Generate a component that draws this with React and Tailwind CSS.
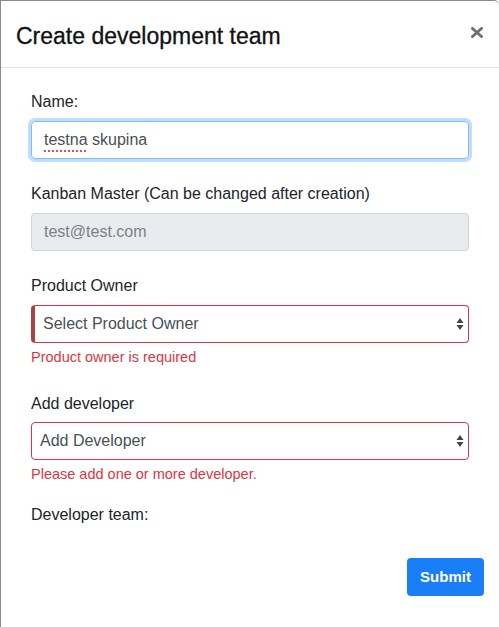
import React from 'react';

const Arrows = () => (
  <svg width="8" height="14" viewBox="0 0 8 14" className="absolute right-[4px] top-1/2 -translate-y-1/2">
    <path d="M4 1 L7.5 6 L0.5 6 Z" fill="#444" />
    <path d="M4 13 L7.5 8 L0.5 8 Z" fill="#444" />
  </svg>
);

const Label = ({ children, className = '' }) => (
  <div className={`text-[16px] leading-[24px] text-[#212529] ${className}`}>{children}</div>
);

const App = () => {
  return (
    <div className="w-[499px] h-[627px] bg-white overflow-hidden" style={{ fontFamily: '"Liberation Sans", Arial, sans-serif' }}>
      <div className="h-full border-l border-t border-[#8a8a8a] rounded-tr-[5px] flex flex-col">
        <div className="flex items-center justify-between h-[67px] border-b border-[#e5e5e5] pl-[15px] pr-[16px]">
          <h5 className="text-[23px] leading-[30px] text-[#111] mt-[3px] [-webkit-text-stroke:0.3px_#111]">Create development team</h5>
          <svg width="12" height="11" viewBox="0 0 12 11" className="-mt-[4px]">
            <path d="M1.5 1.5 L10.5 9.5 M10.5 1.5 L1.5 9.5" stroke="#6f6f6f" strokeWidth="3" strokeLinecap="round" />
          </svg>
        </div>

        <div className="px-[30px] pt-[22px]">
          <Label className="mb-[7px]">Name:</Label>
          <div className="h-[38px] rounded-[4px] border border-[#80bdff] shadow-[0_0_0_3px_rgba(0,123,255,0.25)] px-[12px] flex items-center text-[16px] text-[#495057]">
            <span className="underline decoration-dotted decoration-[#e05050] decoration-2 underline-offset-[5px]">testna</span>
            <span>&nbsp;skupina</span>
          </div>

          <Label className="mt-[23px] mb-[7px]">Kanban Master (Can be changed after creation)</Label>
          <div className="h-[38px] rounded-[4px] border border-[#ced4da] bg-[#e9ecef] px-[12px] flex items-center text-[16px] text-[#7b8189]">
            test@test.com
          </div>

          <Label className="mt-[23px] mb-[7px]">Product Owner</Label>
          <div className="relative h-[38px] rounded-[4px] border border-[#dc3545] border-l-[4px] border-l-[#a94442] pl-[8px] flex items-center text-[16px] text-[#495057]">
            Select Product Owner
            <Arrows />
          </div>
          <div className="mt-[4px] text-[14.5px] leading-[21px] text-[#dc3545]">Product owner is required</div>

          <Label className="mt-[24px] mb-[6px]">Add developer</Label>
          <div className="relative h-[38px] rounded-[4px] border border-[#dc3545] pl-[8px] flex items-center text-[16px] text-[#495057]">
            Add Developer
            <Arrows />
          </div>
          <div className="mt-[4px] text-[14.5px] leading-[21px] text-[#dc3545]">Please add one or more developer.</div>

          <Label className="mt-[18px]">Developer team:</Label>
        </div>

        <div className="flex justify-end pr-[15px] mt-[31px]">
          <button className="w-[77px] h-[38px] rounded-[4px] bg-[#1a7ef7] text-white text-[15px] font-bold">
            Submit
          </button>
        </div>
      </div>
    </div>
  );
};

export default App;
